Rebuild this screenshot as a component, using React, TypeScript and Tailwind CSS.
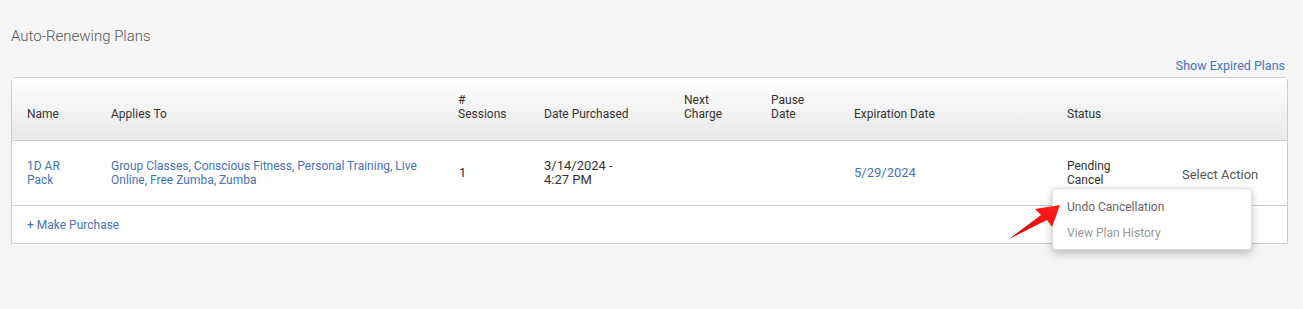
import React from 'react'

const font = { fontFamily: 'Roboto, "Noto Sans", sans-serif' }

function Arrow() {
  return (
    <svg
      className="absolute left-[1006px] top-[202px]"
      width="58"
      height="40"
      viewBox="0 0 58 40"
    >
      <defs>
        <linearGradient id="ar" x1="0" y1="1" x2="1" y2="0">
          <stop offset="0" stopColor="#e00000" />
          <stop offset="1" stopColor="#ff2020" />
        </linearGradient>
      </defs>
      <polygon
        points="3,37 35,13 29,7 54,3 46,25 41,18"
        fill="url(#ar)"
      />
    </svg>
  )
}

function ActionMenu() {
  return (
    <div className="absolute left-[1052px] top-[188px] w-[200px] h-[62px] bg-white border border-[#ddd] rounded-[4px] shadow-[0_3px_8px_rgba(0,0,0,0.25)] pt-[5px] pl-[14px] text-[12px] leading-[26px]">
      <div className="text-[#666]">Undo Cancellation</div>
      <div className="text-[#999]">View Plan History</div>
    </div>
  )
}

const cols = 'grid grid-cols-[99px_347px_86px_140px_87px_83px_213px_115px_1fr]'

export default function App() {
  return (
    <div className="relative w-[1303px] h-[309px] bg-[#f5f5f5] text-[#333]" style={font}>
      <div className="pt-[26px] pl-[11px] pr-[15px]">
        <div className="text-[15px] leading-[20px] text-[#555] font-light">Auto-Renewing Plans</div>
        <div className="mt-[13px] flex justify-end pr-[3px] text-[12.5px] leading-[14px] text-[#4a72b8]">
          Show Expired Plans
        </div>
        <div className="mt-[4px] bg-white border border-[#ccc] rounded-t-[4px] text-[12px]">
          <div className={`${cols} items-end h-[63px] pb-[19px] bg-gradient-to-b from-white to-[#e9e9e9] border-b border-[#ccc] leading-[14px]`}>
            <div className="pl-[15px]">Name</div>
            <div>Applies To</div>
            <div>#<br />Sessions</div>
            <div>Date Purchased</div>
            <div>Next<br />Charge</div>
            <div>Pause<br />Date</div>
            <div>Expiration Date</div>
            <div>Status</div>
            <div />
          </div>
          <div className={`${cols} items-center h-[65px] border-b border-[#ccc] leading-[14px]`}>
            <div className="pl-[15px] text-[#4a72b8]">
              <div className="w-[42px]">1D AR Pack</div>
            </div>
            <div className="pr-[28px] text-[#4a72b8]">
              Group Classes, Conscious Fitness, Personal Training, Live Online, Free Zumba, Zumba
            </div>
            <div className="text-[13px] pl-[1px]">1</div>
            <div className="text-[13px]">
              <div className="w-[90px]">3/14/2024 - 4:27 PM</div>
            </div>
            <div />
            <div />
            <div className="text-[13px] text-[#4a72b8]">5/29/2024</div>
            <div className="pr-[50px]">Pending Cancel</div>
            <div className="text-[13px] text-[#555] pt-[3px]">Select Action</div>
          </div>
          <div className="h-[37px] flex items-center pl-[15px] text-[#4a72b8] leading-[14px]">
            + Make Purchase
          </div>
        </div>
      </div>
      <ActionMenu />
      <Arrow />
    </div>
  )
}
